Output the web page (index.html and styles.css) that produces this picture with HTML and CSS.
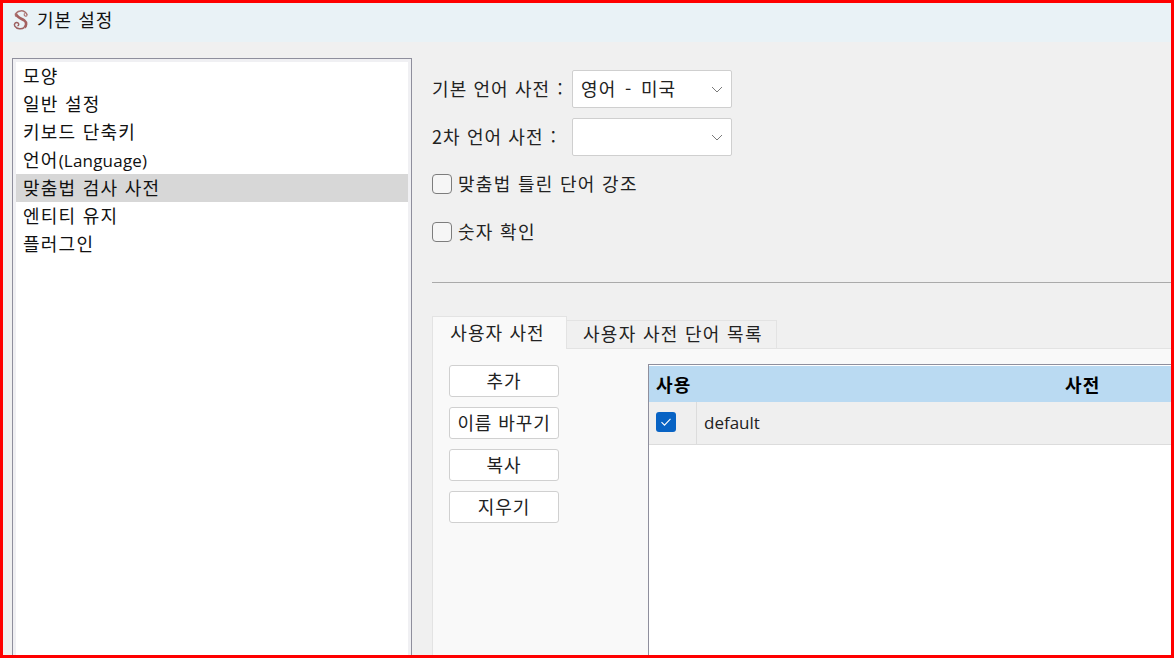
FILE: index.html
```html
<!DOCTYPE html>
<html lang="ko">
<head>
<meta charset="utf-8">
<title>기본 설정</title>
<link rel="stylesheet" href="styles.css">
</head>
<body>
<div class="frame">
  <header class="titlebar">
    <svg class="logo" width="16" height="20" viewBox="0 0 16 20" aria-hidden="true">
      <path d="M2.8 3.6C3.6 7.6 8.6 8.4 11.4 10.6 13.8 12.5 13.6 15.8 11.4 17.4" fill="none" stroke="#a4605f" stroke-width="2.6"/>
      <path d="M14.2 5.2C13.6 2.4 10.6.6 7.6.9 4.2 1.2 1.8 3.4 2.8 6.4" fill="none" stroke="#a9706e" stroke-width="1.5"/>
      <path d="M11.4 17.4C8.8 19.6 3.8 19.4 1.8 16.2 .6 14 2.6 12 4.6 12.7c1.6.6 1.5 3-.2 3" fill="none" stroke="#9c6060" stroke-width="1.5"/>
      <path d="M14.2 5.2c-.6 1.3-2.6 1.2-3-.1-.2-.7.2-1.3.8-1.5" fill="none" stroke="#a9706e" stroke-width="1.1"/>
    </svg>
    <span class="title">기본 설정</span>
  </header>
  <div class="main">
    <nav class="sidebar">
      <ul class="menu">
        <li class="item">모양</li>
        <li class="item">일반 설정</li>
        <li class="item">키보드 단축키</li>
        <li class="item">언어<span class="latin">(Language)</span></li>
        <li class="item selected">맞춤법 검사 사전</li>
        <li class="item">엔티티 유지</li>
        <li class="item">플러그인</li>
      </ul>
    </nav>
    <section class="content">
      <div class="form-row">
        <label class="label">기본 언어 사전 <span class="colon">:</span></label>
        <div class="select"><span class="select-value">영어 - 미국</span>
          <svg class="chev" width="12" height="7" viewBox="0 0 12 7"><path d="M1 1l5 5 5-5" fill="none" stroke="#7a7a7a" stroke-width="1"/></svg>
        </div>
      </div>
      <div class="form-row">
        <label class="label">2차 언어 사전 <span class="colon">:</span></label>
        <div class="select"><span class="select-value"></span>
          <svg class="chev" width="12" height="7" viewBox="0 0 12 7"><path d="M1 1l5 5 5-5" fill="none" stroke="#7a7a7a" stroke-width="1"/></svg>
        </div>
      </div>
      <div class="checks">
        <div class="check-row"><span class="box"></span><span class="check-text">맞춤법 틀린 단어 강조</span></div>
        <div class="check-row"><span class="box"></span><span class="check-text">숫자 확인</span></div>
      </div>
      <hr class="sep">
      <div class="tabs">
        <div class="tab active">사용자 사전</div>
        <div class="tab">사용자 사전 단어 목록</div>
      </div>
      <div class="panel">
        <div class="buttons">
          <button class="btn">추가</button>
          <button class="btn">이름 바꾸기</button>
          <button class="btn">복사</button>
          <button class="btn">지우기</button>
        </div>
        <div class="table">
          <div class="thead">
            <div class="th-use">사용</div>
            <div class="th-name">사전</div>
          </div>
          <div class="tr">
            <div class="td-use">
              <span class="checked">
                <svg width="12" height="10" viewBox="0 0 12 10"><path d="M1.5 5.2l3 3 6-6.4" fill="none" stroke="#fff" stroke-width="1.1"/></svg>
              </span>
            </div>
            <div class="td-name">default</div>
          </div>
        </div>
      </div>
    </section>
  </div>
</div>
</body>
</html>
```
FILE: styles.css
```css
* { box-sizing: border-box; }
html, body { margin: 0; padding: 0; }
body {
  width: 1174px;
  height: 658px;
  overflow: hidden;
  font-family: "Noto Sans CJK KR", "Noto Sans", sans-serif;
  color: #111;
}
.frame {
  width: 1174px;
  height: 658px;
  border: 3px solid #ff0000;
  background: #f0f0f0;
  display: flex;
  flex-direction: column;
  overflow: hidden;
}
.titlebar {
  height: 39px;
  flex: none;
  background: #e9f2f6;
  display: flex;
  align-items: center;
  padding-left: 10px;
  gap: 8px;
}
.title { font-size: 18px; letter-spacing: 1px; line-height: 1; margin-top: -7px; }
.logo { margin-top: -5px; }
.main { flex: 1; display: flex; min-height: 0; }
.sidebar {
  width: 400px;
  flex: none;
  margin: 16px 0 0 9px;
  border: 1px solid #8f8f9d;
  border-bottom: 0;
  padding: 3px 3px 0;
  background: #f0f0f3;
}
.menu {
  list-style: none;
  margin: 0;
  padding: 0;
  height: 100%;
  background: #fff;
}
.item {
  height: 28px;
  line-height: 26px;
  padding-left: 7px;
  font-size: 18px;
  letter-spacing: 1.25px;
  white-space: nowrap;
}
.latin { font-family: "Open Sans", sans-serif; font-size: 17px; letter-spacing: 0.2px; }
.selected { background: #d7d7d7; }
.content { flex: 1; padding: 28px 0 0 20px; min-width: 0; }
.form-row { display: flex; align-items: center; height: 38px; margin-bottom: 10px; }
.label { width: 140px; font-size: 18px; letter-spacing: 1.1px; color: #222; white-space: nowrap; margin-top: -2px; }
.colon { margin-left: 1px; }
.select {
  width: 160px;
  height: 38px;
  background: #fff;
  border: 1px solid #cfcfcf;
  border-radius: 2px;
  padding: 0 8px;
  display: flex;
  align-items: center;
  justify-content: space-between;
  font-size: 18px;
  letter-spacing: 1.1px;
}
.select-value { word-spacing: 2.5px; color: #222; margin-top: -2px; }
.chev { margin-right: 0; }
.checks { padding-top: 8px; display: flex; flex-direction: column; gap: 28px; }
.check-row { display: flex; align-items: center; height: 20px; gap: 6px; }
.box {
  width: 20px;
  height: 20px;
  background: #f6f6f6;
  border: 1px solid #7d7d7d;
  border-radius: 4px;
}
.check-text { font-size: 18px; letter-spacing: 1.3px; color: #222; margin-top: -2px; }
.sep { margin: 40px 0 0; border: 0; height: 1px; background: #aaa; }
.tabs { display: flex; align-items: flex-end; height: 33px; margin-top: 33px; }
.tab {
  height: 29px;
  padding: 0 13px 0 16px;
  line-height: 25px;
  font-size: 18px;
  letter-spacing: 1.3px;
  color: #222;
  background: #f0f0f0;
  border: 1px solid #e3e3e3;
  border-left: 0;
}
.tab.active {
  height: 33px;
  width: 135px;
  padding: 0 4px 0 0;
  text-align: center;
  line-height: 31px;
  letter-spacing: 1.1px;
  background: #f9f9f9;
  border: 1px solid #e3e3e3;
  border-bottom: 0;
  position: relative;
  z-index: 1;
}
.panel {
  display: flex;
  height: 400px;
  background: #f9f9f9;
  border-left: 1px solid #e3e3e3;
  border-top: 1px solid #e3e3e3;
  padding: 16px 0 0 16px;
  margin-top: -1px;
}
.buttons { width: 110px; flex: none; display: flex; flex-direction: column; gap: 10px; }
.btn {
  width: 110px;
  height: 32px;
  padding: 0 0 2px;
  background: #fff;
  border: 1px solid #d0d0d0;
  border-radius: 3px;
  font-family: inherit;
  font-size: 18px;
  letter-spacing: 0.9px;
  color: #222;
  line-height: 1;
}
.table {
  flex: 1;
  margin: -1px 0 0 89px;
  background: #fff;
  border-left: 1px solid #8f8f9d;
  border-top: 1px solid #8f8f9d;
}
.thead {
  margin-top: 1px;
  height: 36px;
  background: #badaf2;
  display: flex;
  align-items: center;
  font-size: 18px;
  letter-spacing: 1.2px;
  font-weight: 700;
  color: #000;
}
.th-use { width: 416px; padding-left: 7px; flex: none; }
.th-name { flex: none; }
.tr { height: 43px; display: flex; background: #efefef; border-bottom: 1px solid #dcdcdc; }
.td-use {
  width: 48px;
  flex: none;
  border-right: 1px solid #dcdcdc;
  padding: 10px 0 0 7px;
}
.checked {
  display: flex;
  width: 20px;
  height: 20px;
  border-radius: 3px;
  background: #0863c4;
  align-items: center;
  justify-content: center;
}
.td-name {
  padding-left: 7px;
  font-family: "Open Sans", sans-serif;
  font-size: 17px;
  line-height: 42px;
  color: #222;
}
```
